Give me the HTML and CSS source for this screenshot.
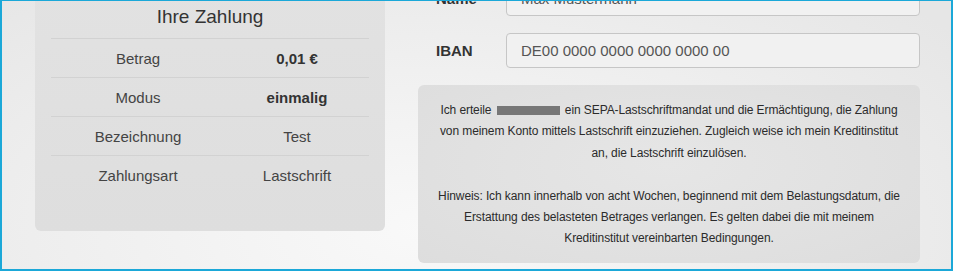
FILE: index.html
```html
<!DOCTYPE html>
<html lang="de">
<head>
<meta charset="utf-8">
<title>Zahlung</title>
<link rel="stylesheet" href="styles.css">
</head>
<body>
<div class="frame">
  <div class="content">
    <section class="summary">
      <h2 class="summary-title">Ihre Zahlung</h2>
      <div class="summary-row">
        <span class="summary-label">Betrag</span>
        <span class="summary-value strong">0,01 €</span>
      </div>
      <div class="summary-row">
        <span class="summary-label">Modus</span>
        <span class="summary-value strong">einmalig</span>
      </div>
      <div class="summary-row">
        <span class="summary-label">Bezeichnung</span>
        <span class="summary-value">Test</span>
      </div>
      <div class="summary-row">
        <span class="summary-label">Zahlungsart</span>
        <span class="summary-value">Lastschrift</span>
      </div>
    </section>
    <section class="form">
      <div class="form-row">
        <label class="form-label">Name</label>
        <div class="form-input">Max Mustermann</div>
      </div>
      <div class="form-row">
        <label class="form-label">IBAN</label>
        <div class="form-input">DE00 0000 0000 0000 0000 00</div>
      </div>
      <div class="mandate">
        <p>Ich erteile <span class="redacted"></span> ein SEPA-Lastschriftmandat und die Ermächtigung, die Zahlung von meinem Konto mittels Lastschrift einzuziehen. Zugleich weise ich mein Kreditinstitut an, die Lastschrift einzulösen.</p>
        <p>Hinweis: Ich kann innerhalb von acht Wochen, beginnend mit dem Belastungsdatum, die Erstattung des belasteten Betrages verlangen. Es gelten dabei die mit meinem Kreditinstitut vereinbarten Bedingungen.</p>
      </div>
    </section>
  </div>
</div>
</body>
</html>
```
FILE: styles.css
```css
* { box-sizing: border-box; }
html, body { margin: 0; padding: 0; }
body {
  font-family: "Liberation Sans", Arial, sans-serif;
  color: #333;
}
.frame {
  width: 953px;
  height: 271px;
  overflow: hidden;
  border: 2px solid #1ba8d8;
  border-top-width: 1px;
  background: radial-gradient(ellipse 70% 120% at 45% 85%, #f9f9f9 0%, #eeeeee 60%, #e6e6e6 100%);
}
.content {
  display: flex;
  align-items: flex-start;
  gap: 33px;
  margin-top: -20px;
  padding-left: 33px;
}
.summary {
  width: 350px;
  height: 250px;
  padding: 0 16px;
  border-radius: 6px;
  background: linear-gradient(180deg, #e2e2e2 0%, #dedede 100%);
}
.summary-title {
  margin: 0;
  padding: 25px 0 10px;
  font-size: 19px;
  line-height: 22px;
  font-weight: normal;
  text-align: center;
  color: #333;
}
.summary-row {
  display: grid;
  grid-template-columns: 174px 144px;
  height: 39px;
  align-items: center;
  border-top: 1px solid #d2d2d2;
  font-size: 15px;
  color: #444;
  text-align: center;
}
.summary-value.strong { font-weight: bold; color: #333; }
.form {
  width: 502px;
  display: flex;
  flex-direction: column;
  gap: 17px;
}
.form-row {
  display: flex;
  align-items: center;
}
.form-label {
  width: 88px;
  padding-left: 18px;
  font-size: 15px;
  font-weight: bold;
  color: #333;
}
.form-input {
  flex: 1;
  height: 35px;
  padding: 0 14px;
  display: flex;
  align-items: center;
  border: 1px solid #c6c6c6;
  border-radius: 4px;
  background: #f1f1f1;
  font-size: 15px;
  color: #555;
}
.mandate {
  height: 178px;
  padding: 15px 15px 0;
  border-radius: 6px;
  background: radial-gradient(ellipse 80% 90% at 50% 45%, #e6e6e6 0%, #dcdcdc 100%);
  text-align: center;
  font-size: 12px;
  line-height: 21.3px;
  color: #2b2b2b;
  letter-spacing: -0.1px;
}
.mandate p { margin: 0 0 22px; }
.redacted {
  display: inline-block;
  width: 63px;
  height: 9px;
  background: #777;
  vertical-align: -1px;
  margin: 0 2px;
}
```
